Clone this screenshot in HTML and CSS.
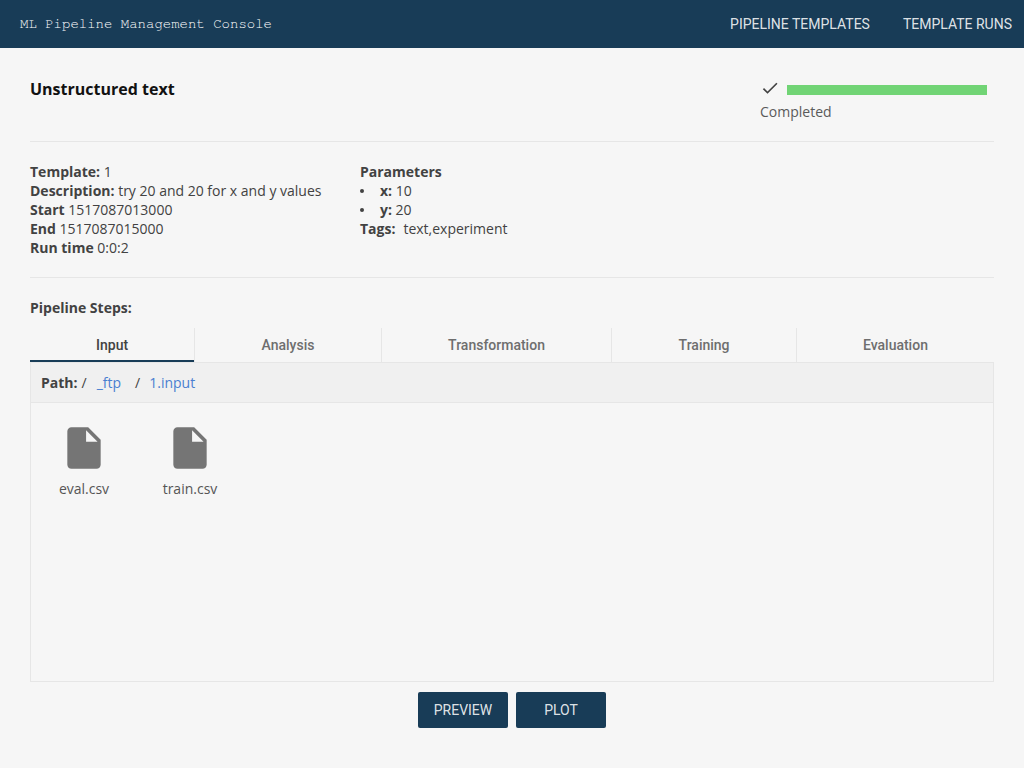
FILE: index.html
```html
<!DOCTYPE html>
<html lang="en">
<head>
<meta charset="utf-8">
<title>ML Pipeline Management Console</title>
<link rel="stylesheet" href="styles.css">
</head>
<body>
<header class="topbar">
  <span class="brand">ML Pipeline Management Console</span>
  <nav class="topnav">
    <a class="topnav-link">PIPELINE TEMPLATES</a>
    <a class="topnav-link">TEMPLATE RUNS</a>
  </nav>
</header>
<main class="page">
  <section class="summary">
    <h1 class="run-title">Unstructured text</h1>
    <div class="status">
      <div class="status-row">
        <svg class="check" width="20" height="20" viewBox="0 0 24 24"><path fill="#424242" d="M9 16.170 4.830 12l-1.420 1.410L9 19 21 7l-1.410-1.410z"/></svg>
        <div class="progress"></div>
      </div>
      <div class="status-label">Completed</div>
    </div>
  </section>
  <section class="details">
    <div class="details-left">
      <div><b>Template:</b> 1</div>
      <div><b>Description:</b> try 20 and 20 for x and y values</div>
      <div><b>Start</b> 1517087013000</div>
      <div><b>End</b> 1517087015000</div>
      <div><b>Run time</b> 0:0:2</div>
    </div>
    <div class="details-right">
      <div><b>Parameters</b></div>
      <ul class="params">
        <li class="param"><b>x:</b> 10</li>
        <li class="param"><b>y:</b> 20</li>
      </ul>
      <div><b>Tags:</b><span class="tags">text,experiment</span></div>
    </div>
  </section>
  <div class="steps-title">Pipeline Steps:</div>
  <div class="tabs">
    <div class="tab tab-active">Input</div>
    <div class="tab">Analysis</div>
    <div class="tab">Transformation</div>
    <div class="tab">Training</div>
    <div class="tab">Evaluation</div>
  </div>
  <section class="panel">
    <div class="pathbar">
      <b>Path:</b><span class="sep">/</span><a class="crumb">_ftp</a><span class="sep sep-wide">/</span><a class="crumb">1.input</a>
    </div>
    <div class="files">
      <div class="file">
        <svg class="file-icon" width="50" height="50" viewBox="0 0 24 24"><path fill="#757575" d="M6 2c-1.100 0-2 .9-2 2v16c0 1.100.9 2 2 2h12c1.100 0 2-.9 2-2V8l-6-6H6zm7 7V3.500L18.500 9H13z"/></svg>
        <div class="file-name">eval.csv</div>
      </div>
      <div class="file">
        <svg class="file-icon" width="50" height="50" viewBox="0 0 24 24"><path fill="#757575" d="M6 2c-1.100 0-2 .9-2 2v16c0 1.100.9 2 2 2h12c1.100 0 2-.9 2-2V8l-6-6H6zm7 7V3.500L18.500 9H13z"/></svg>
        <div class="file-name">train.csv</div>
      </div>
    </div>
  </section>
  <div class="actions">
    <button class="btn">PREVIEW</button>
    <button class="btn">PLOT</button>
  </div>
</main>
</body>
</html>
```
FILE: styles.css
```css
* { box-sizing: border-box; }
html, body { margin: 0; height: 100%; }
body {
  background: #f6f6f6;
  color: #424242;
  font-family: "Open Sans", sans-serif;
  font-size: 14px;
  line-height: 19px;
}
.topbar {
  height: 48px;
  background: #183c57;
  display: flex;
  align-items: center;
  justify-content: space-between;
  padding: 0 12px 0 20px;
}
.brand {
  font-family: FreeMono, "Liberation Mono", monospace;
  font-size: 14px;
  color: #fff;
}
.topnav { display: flex; gap: 33px; }
.topnav-link {
  font-family: Roboto, sans-serif;
  font-size: 14px;
  color: rgba(255,255,255,.87);
}
.page { padding: 0 30px; }
.summary {
  height: 94px;
  display: flex;
  justify-content: space-between;
  border-bottom: 1px solid #e6e6e6;
  padding-top: 30px;
}
.run-title {
  margin: 0;
  font-size: 16px;
  line-height: 22px;
  font-weight: 700;
  color: #111;
}
.status { width: 234px; }
.status-row { display: flex; align-items: center; gap: 7px; height: 24px; }
.check { display: block; margin-bottom: 4px; }
.progress { width: 200px; height: 10px; background: #71d475; }
.status-label { color: #5a5a5a; }
.details {
  height: 136px;
  display: flex;
  padding-top: 20px;
  border-bottom: 1px solid #e6e6e6;
}
.details-left { width: 330px; }
.params { margin: 0; padding: 0; list-style: none; }
.param::before {
  content: "";
  display: inline-block;
  width: 4px;
  height: 4px;
  margin-right: 16px;
  vertical-align: 3px;
  border-radius: 50%;
  background: #424242;
}
.tags { margin-left: 8px; }
.steps-title { margin-top: 20px; font-weight: 700; }
.tabs { display: flex; margin-top: 11px; height: 34px; }
.tab {
  flex: 1 1 auto;
  display: flex;
  align-items: center;
  justify-content: center;
  font-family: Roboto, sans-serif;
  font-weight: 500;
  font-size: 14px;
  color: #6e6e6e;
  border-left: 1px solid #e6e6e6;
}
.tab:first-child { border-left: 0; }
.tab:last-child { flex-grow: .996; }
.tab-active { flex-grow: .996; color: #424242; padding-top: 2px; border-bottom: 2px solid #183c57; }
.panel {
  height: 320px;
  border: 1px solid #e6e6e6;
}
.pathbar {
  height: 40px;
  display: flex;
  align-items: center;
  padding-left: 10px;
  background: #f0f0f0;
  border-bottom: 1px solid #e6e6e6;
}
.sep { margin-left: 4px; margin-right: 10px; }
.sep-wide { margin-left: 14px; margin-right: 9px; }
.crumb { color: #4a7fd0; }
.files { display: flex; padding: 20px 0 0 7px; gap: 14px; }
.file { width: 92px; display: flex; flex-direction: column; align-items: center; }
.file-icon { display: block; }
.file-name { margin-top: 6px; color: #555; }
.actions { display: flex; justify-content: center; gap: 8px; margin-top: 10px; }
.btn {
  width: 90px;
  height: 36px;
  background: #183c57;
  color: rgba(255,255,255,.87);
  border: 0;
  border-radius: 2px;
  font-family: Roboto, sans-serif;
  font-size: 14px;
  padding: 0;
}
```
